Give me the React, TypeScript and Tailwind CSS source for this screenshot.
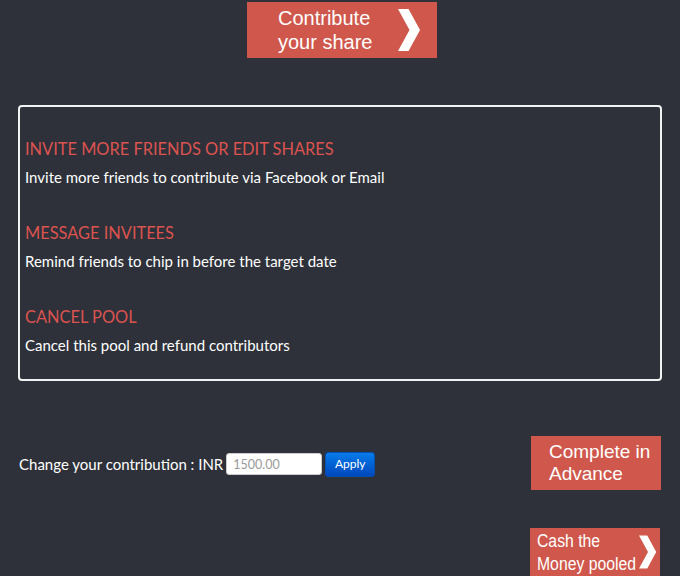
import React from 'react';

const sections = [
  { title: 'INVITE MORE FRIENDS OR EDIT SHARES', text: 'Invite more friends to contribute via Facebook or Email' },
  { title: 'MESSAGE INVITEES', text: 'Remind friends to chip in before the target date' },
  { title: 'CANCEL POOL', text: 'Cancel this pool and refund contributors' },
];

const Chevron = ({ className }: { className?: string }) => (
  <svg viewBox="0 0 24 44" className={className} fill="white">
    <polygon points="0,0 11,0 23,22 11,44 0,44 12,22" />
  </svg>
);

export default function App() {
  return (
    <div className="min-h-[576px] w-[680px] overflow-hidden bg-[#2e3139] text-white" style={{ fontFamily: 'Lato, "Open Sans", sans-serif' }}>
      {/* Contribute button */}
      <div className="flex justify-center pl-[4px] pt-[2px]">
        <button className="flex h-[56px] w-[190px] items-center bg-[#cf574b] pl-[31px] pr-[16px]">
          <span className="flex-1 text-left text-[20px] leading-[24px] text-white" style={{ fontFamily: '"Liberation Sans", Arial, sans-serif' }}>
            Contribute<br />your share
          </span>
          <Chevron className="h-[44px] w-[23px] shrink-0" />
        </button>
      </div>

      {/* Actions box */}
      <div className="mx-[18px] mt-[47px] h-[276px] w-[644px] rounded-[4px] border-2 border-[#f2f2f2] px-[5px] pt-[31px]">
        {sections.map((s) => (
          <div key={s.title} className="mb-[34px]">
            <div className="text-[16.4px] font-normal leading-[22px] text-[#dc5350]">{s.title}</div>
            <div className="mt-[6px] text-[15px] leading-[22px] text-white">{s.text}</div>
          </div>
        ))}
      </div>

      {/* Contribution row */}
      <div className="mx-[19px] mt-[55px] flex items-center justify-between">
        <div className="mt-[2px] flex items-center">
          <span className="text-[15px] text-white">Change your contribution : INR</span>
          <input
            defaultValue="1500.00"
            className="ml-[3px] h-[22px] w-[96px] rounded-[3px] border border-[#ccc] bg-white px-[6px] text-[12.5px] text-[#999]"
          />
          <button className="ml-[3px] h-[25px] w-[50px] rounded-[3px] border border-[#0050b0] bg-gradient-to-b from-[#0a7bea] to-[#0047bd] text-[12px] text-white">
            Apply
          </button>
        </div>
        <button className="h-[54px] w-[130px] bg-[#cf574b] pl-[18px] text-left text-[19px] leading-[22px] text-white" style={{ fontFamily: '"Liberation Sans", Arial, sans-serif' }}>
          Complete in<br />Advance
        </button>
      </div>

      <div className="mx-[20px] mt-[38px] flex justify-end">
        <button className="flex h-[52px] w-[130px] items-start justify-between bg-[#cf574b] pl-[7px] pr-[3px] pt-[2px]">
          <span className="w-[100px] origin-left scale-x-[0.9] whitespace-nowrap text-left text-[17.5px] leading-[23px] text-white" style={{ fontFamily: '"Liberation Sans", Arial, sans-serif' }}>
            Cash the<br />Money pooled
          </span>
          <Chevron className="h-[44px] w-[18px] shrink-0" />
        </button>
      </div>
    </div>
  );
}
